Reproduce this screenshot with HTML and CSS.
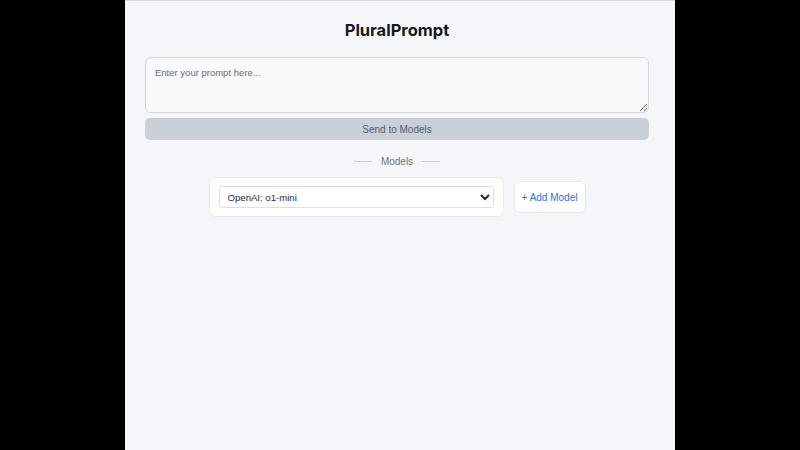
FILE: index.html
```html
<!DOCTYPE html>
<html>
<head>
<meta charset="utf-8">
<link rel="stylesheet" href="styles.css">
</head>
<body>
<div class="app">
  <h1 class="title">PluralPrompt</h1>
  <textarea class="prompt" placeholder="Enter your prompt here..."></textarea>
  <button class="send" disabled>Send to Models</button>
  <div class="divider"><span class="line"></span><span class="label">Models</span><span class="line"></span></div>
  <div class="models">
    <div class="card">
      <select class="select">
        <option>OpenAI: o1-mini</option>
      </select>
    </div>
    <button class="add">+ Add Model</button>
  </div>
</div>
</body>
</html>
```
FILE: styles.css
```css
html, body {
  margin: 0;
  padding: 0;
  height: 100%;
  background: #000;
}
body {
  font-family: "Liberation Sans", Arial, sans-serif;
}
.app {
  width: 550px;
  height: 450px;
  margin: 0 auto;
  background: #f5f6f9;
  box-sizing: border-box;
  padding: 0 26px 0 20px;
  display: flex;
  flex-direction: column;
  border-top: 1px solid #d6dccc;
}
.title {
  margin: 19px 0 0;
  height: 20px;
  line-height: 20px;
  font-family: Inter, "Liberation Sans", sans-serif;
  font-size: 16.5px;
  font-weight: 700;
  color: #16181d;
  text-align: center;
}
.prompt {
  margin-top: 17px;
  height: 56px;
  box-sizing: border-box;
  width: 100%;
  border: 1px solid #d4d7de;
  border-radius: 6px;
  background: #fafafd;
  padding: 9px 9px;
  font-family: inherit;
  font-size: 9.5px;
  color: #333;
  resize: vertical;
}
.prompt::placeholder {
  color: #656a75;
}
.send {
  margin-top: 5px;
  height: 22px;
  width: 100%;
  border: none;
  border-radius: 5px;
  background: #cbd0d8;
  color: #555c69;
  font-family: inherit;
  font-size: 10px;
}
.divider {
  margin-top: 14px;
  display: flex;
  justify-content: center;
  align-items: center;
  gap: 9px;
  height: 14px;
}
.line {
  width: 18px;
  height: 1px;
  background: #c9ccd2;
}
.label {
  font-size: 10px;
  color: #6b7280;
}
.models {
  margin-top: 9px;
  display: flex;
  justify-content: center;
  align-items: flex-start;
  gap: 10px;
}
.card {
  width: 295px;
  height: 40px;
  box-sizing: border-box;
  background: #fff;
  border: 1px solid #e7e9ee;
  border-radius: 6px;
  padding: 8px 9px 0 9px;
}
.select {
  width: 100%;
  height: 22px;
  border: 1px solid #dcdfe5;
  border-radius: 3px;
  background: #fff;
  font-family: inherit;
  font-size: 9.6px;
  color: #1f2937;
  padding: 0 4px;
}
.add {
  margin-top: 4px;
  width: 72px;
  height: 32px;
  box-sizing: border-box;
  background: #fff;
  border: 1px solid #e7e9ee;
  border-radius: 6px;
  color: #2f6fe0;
  font-family: inherit;
  font-size: 10px;
  padding: 0;
}
```
